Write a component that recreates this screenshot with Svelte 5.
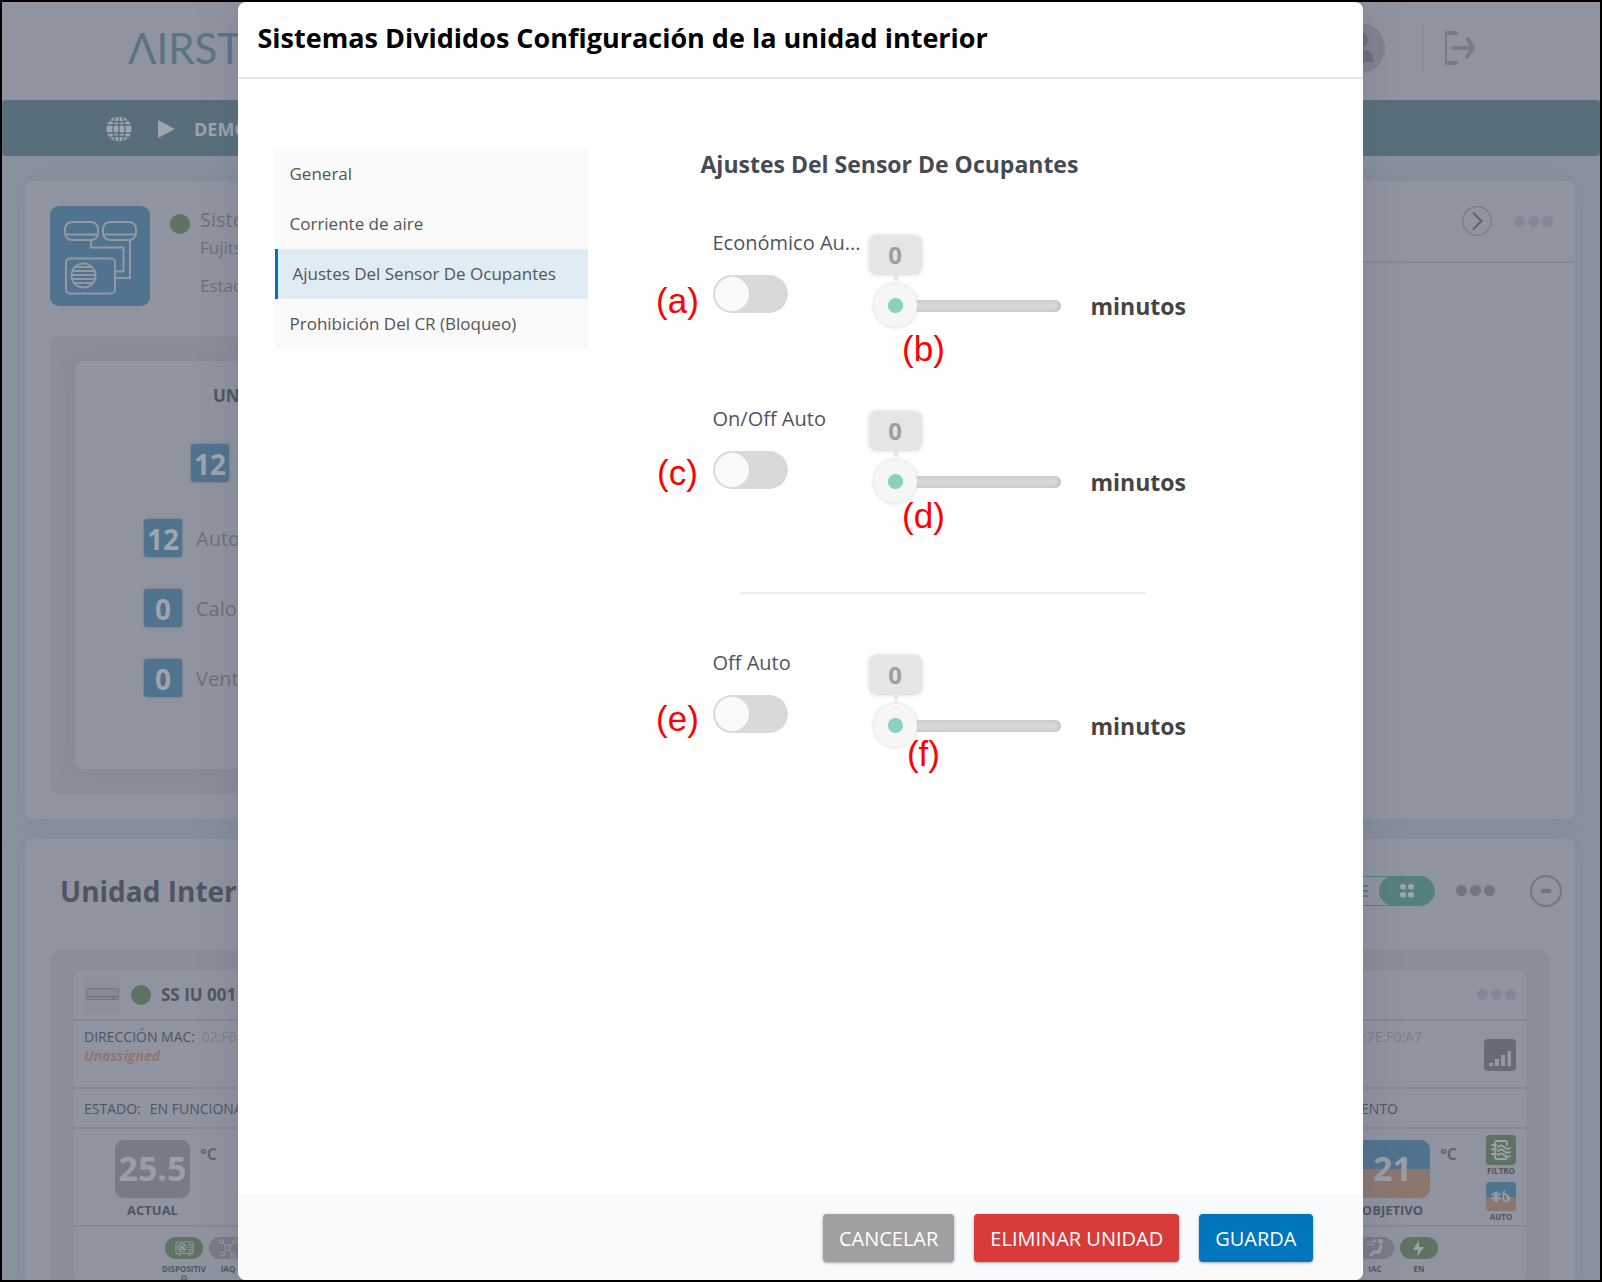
<script>
  const menu = ['General', 'Corriente de aire', 'Ajustes Del Sensor De Ocupantes', 'Prohibición Del CR (Bloqueo)'];
  let active = $state(2);

  let sensors = $state([
    { id: 'eco', label: 'Económico Au...', on: false, minutes: 0 },
    { id: 'onoff', label: 'On/Off Auto', on: false, minutes: 0 },
    { id: 'off', label: 'Off Auto', on: false, minutes: 0, divided: true }
  ]);

  const marks = ['a', 'b', 'c', 'd', 'e', 'f'];

  const modes = [
    { count: 12, label: 'Auto' },
    { count: 0, label: 'Calor' },
    { count: 0, label: 'Ventil.' }
  ];
</script>

{#snippet dots()}
  <span class="dots"><i></i><i></i><i></i></span>
{/snippet}

<div class="app">
  <div class="page">
    <header class="top">
      <span class="logo">ΛIRST</span>
      <div class="account">
        <svg class="avatar" width="50" height="50" viewBox="0 0 50 50">
          <circle cx="25" cy="25" r="25" fill="#7f838f" />
          <circle cx="25" cy="17" r="8" fill="#686d7b" />
          <path d="M12 39v-3q0-9 10-9h6q10 0 10 9v3z" fill="#686d7b" />
        </svg>
        <span class="rule"></span>
        <svg width="32" height="36" viewBox="0 0 32 36" fill="none" stroke="#777b86" stroke-width="4" stroke-linecap="round" stroke-linejoin="round">
          <path d="M3 3v30" stroke-width="2" />
          <path d="M4 3h9M4 33h9M10 18h18M25 9l5 9-6 9" />
        </svg>
      </div>
    </header>

    <nav class="bar">
      <svg width="26" height="26" viewBox="0 0 26 26">
        <circle cx="13" cy="13" r="12.5" fill="#a0a4ad" />
        <g fill="none" stroke="#586f7b" stroke-width="1.3">
          <ellipse cx="13" cy="13" rx="6" ry="14" />
          <path d="M13 0v26M0 9h26M0 17h26M3 4.500q10 3 20 0M3 21.500q10-3 20 0" />
        </g>
      </svg>
      <svg width="17" height="18" viewBox="0 0 17 18"><path d="M0 0l17 9-17 9z" fill="#a0a4ad" /></svg>
      <b>DEMO</b>
    </nav>

    <section class="card system">
      <div class="summary">
        <div class="ident">
          <svg width="100" height="100" viewBox="0 0 100 100" fill="none" stroke="#9498a3" stroke-width="2">
            <rect width="100" height="100" rx="9" fill="#50738f" stroke="none" />
            <rect x="15" y="16" width="33" height="18" rx="7" />
            <rect x="53" y="16" width="33" height="18" rx="7" />
            <path d="M15 28.500h33M53 28.500h33" />
            <path d="M41 34v7.500h32.500v24H65M80 34v38H65" />
            <rect x="16" y="52.500" width="49" height="35" rx="4" />
            <circle cx="33.500" cy="69.500" r="12" />
            <path d="M25 61h17M22 65h23M22 69h24M22 73h23M25 77h17" />
          </svg>
          <i class="status"></i>
          <div class="names">
            <span class="name">Sistema</span>
            <span>Fujitsu</span>
            <span class="state">Estado</span>
          </div>
        </div>
        <div class="panel">
          <div class="counts">
            <b class="caption">UNIDAD</b>
            <b class="count total">12</b>
            {#each modes as mode}
              <div class="mode"><b class="count">{mode.count}</b><span>{mode.label}</span></div>
            {/each}
          </div>
        </div>
      </div>
      <div class="actions">
        <svg width="30" height="30" viewBox="0 0 30 30" fill="none" stroke="#777b86" stroke-linecap="round">
          <circle cx="15" cy="15" r="14.300" stroke-width="1.200" />
          <path d="M11.500 7l8 8-8 8" stroke="#5d616d" stroke-width="2" />
        </svg>
        {@render dots()}
      </div>
    </section>

    <section class="card indoor">
      <div class="heading">
        <h2>Unidad Interior</h2>
        <div class="tools">
          <span class="view">
            <svg width="16" height="12" viewBox="0 0 16 12" stroke="#54807f" stroke-width="2"><path d="M0 1h16M0 6h16M0 11h16" /></svg>
            <span class="grid-view">
              <svg width="14" height="14" viewBox="0 0 14 14" fill="#a0a4ad">
                <rect width="6" height="5.500" rx="2.500" /><rect x="8" width="6" height="5.500" rx="2.500" />
                <rect y="8" width="6" height="5.500" rx="2.500" /><rect x="8" y="8" width="6" height="5.500" rx="2.500" />
              </svg>
            </span>
          </span>
          <span class="dark">{@render dots()}</span>
          <span class="minus"></span>
        </div>
      </div>

      <div class="units">
        <article class="unit">
          <div class="row title">
            <svg width="37" height="38" viewBox="0 0 37 38">
              <rect width="37" height="38" fill="#8c909b" />
              <rect x="2.500" y="12.500" width="32" height="11" rx="1" fill="#858994" stroke="#747884" />
              <path d="M3 20.500h31M27 22h5" stroke="#6c707c" />
            </svg>
            <i class="status"></i>
            <b>SS IU 001</b>
          </div>
          <div class="row mac">
            <div>
              <div>DIRECCIÓN MAC: <span class="faint">02:F6:</span></div>
              <em>Unassigned</em>
            </div>
          </div>
          <div class="row run">ESTADO: <span>EN FUNCIONA</span></div>
          <div class="row temps">
            <div class="temp"><b class="degrees">25.5</b><b>ACTUAL</b></div>
            <b class="celsius">°C</b>
          </div>
          <div class="row pills">
            <div class="pill green">
              <svg width="38" height="22" viewBox="0 0 38 22" fill="none" stroke="#9498a3" stroke-width="1.200">
                <rect x="11" y="5" width="17" height="11.500" rx="1" />
                <circle cx="17" cy="10.700" r="4" /><circle cx="17" cy="10.700" r="1.300" />
                <path d="M14 8l6 5.500M14 13.500L20 8M23 7.500h4M23 10h4M23 12.500h4M23 14.500h4M13 18h3M23 18h3" />
              </svg>
              <b>DISPOSITIV<br />O</b>
            </div>
            <div class="pill">
              <svg width="38" height="22" viewBox="0 0 38 22" fill="none" stroke="#9a9ea8">
                <circle cx="18.500" cy="10.500" r="3" />
                <circle cx="12.500" cy="4.500" r="2" /><circle cx="26" cy="4.500" r="2" /><circle cx="13.500" cy="17" r="2" /><circle cx="24" cy="19" r="2" />
                <path d="M14 6l2.500 2.500M24.500 5.500L21 8.500M15 15.500l2-2.500M20.500 13l2.500 4" />
              </svg>
              <b>IAQ</b>
            </div>
          </div>
        </article>

        <article class="unit end">
          <div class="row title">{@render dots()}</div>
          <div class="row mac">
            <span class="faint">A:7E:F0:A7</span>
            <svg width="32" height="32" viewBox="0 0 32 32">
              <rect width="32" height="32" rx="4" fill="#676b77" />
              <path d="M5 27v-3h4v3zM11 27v-7h4v7zM17 27V16h4v11zM23.500 27V12h3.500v15z" fill="#9498a3" />
            </svg>
          </div>
          <div class="row run">MIENTO</div>
          <div class="row temps">
            <div class="temp"><b class="degrees target">21</b><b>OBJETIVO</b></div>
            <b class="celsius">°C</b>
            <div class="flags">
              <svg width="30" height="30" viewBox="0 0 30 30" fill="none" stroke="#9da1aa" stroke-width="1.800" stroke-linecap="round">
                <rect width="30" height="30" rx="4" fill="#5f7362" stroke="none" />
                <path d="M9 12V8q0-2 2-2h8q2 0 2 2v2M9 13v9q0 2 2 2h8q2 0 2-2" />
                <path d="M6 10h4M6 14.500h4M6 19h4M12 12q3-3 6 0t6 1M12 16q3-3 6 0t6 1M12 20q3-3 6 0t6 1" />
              </svg>
              <b>FILTRO</b>
              <svg width="30" height="29" viewBox="0 0 30 29" fill="none" stroke="#9da1aa" stroke-width="1.300" stroke-linecap="round">
                <rect width="30" height="29" rx="4" fill="#50738f" stroke="none" />
                <path d="M0 15h30v10q0 4-4 4H4q-4 0-4-4z" fill="#8c776f" stroke="none" />
                <path d="M10 10v9M6 12l8 5M6 17l8-5M8.500 10.500l1.500 1.500 1.500-1.500M8.500 18.500l1.500-1.500 1.500 1.500" stroke-width="1.500" />
                <path d="M18.500 9q-2.500 2.500-1.500 4M19 11.500q4 3.500 3 7-2 1.500-4 0-2-2.500 1-7zM22 19q2-2.500 0-6" />
              </svg>
              <b>AUTO</b>
            </div>
          </div>
          <div class="row pills">
            <div class="pill">
              <svg width="38" height="22" viewBox="0 0 38 22" fill="none" stroke="#9a9ea8" stroke-width="1.200" stroke-linecap="round" stroke-linejoin="round">
                <circle cx="24.500" cy="4.500" r="1.800" fill="#9a9ea8" />
                <path d="M25 9l-2 6h-5l-3 3" stroke-width="3" />
                <path d="M11 5h7q2 0 1.500-1.500T17 3.500M11 7.500h5q2 0 1.500 1.500" />
              </svg>
              <b>IAC</b>
            </div>
            <div class="pill green">
              <svg width="38" height="22" viewBox="0 0 38 22"><path d="M19 3l-6 10h5l-1 7 7-10h-5z" fill="#9da1aa" /></svg>
              <b>EN</b>
            </div>
          </div>
        </article>
      </div>
    </section>
  </div>

  <div class="modal" role="dialog" aria-labelledby="modal-title">
    <header><h1 id="modal-title">Sistemas Divididos Configuración de la unidad interior</h1></header>

    <div class="body">
      <div class="menu">
        {#each menu as item, i}
          <button class:active={i === active} onclick={() => (active = i)}>{item}</button>
        {/each}
      </div>

      <form class="settings">
        <h2>Ajustes Del Sensor De Ocupantes</h2>
        {#each sensors as sensor}
          {#if sensor.divided}<hr />{/if}
          <div class="sensor">
            <div class="switch">
              <label for="{sensor.id}-on">{sensor.label}</label>
              <input id="{sensor.id}-on" type="checkbox" bind:checked={sensor.on} />
            </div>
            <div class="slider">
              <output for="{sensor.id}-min">{sensor.minutes}</output>
              <input id="{sensor.id}-min" type="range" min="0" max="60" bind:value={sensor.minutes} />
            </div>
            <label class="unit-name" for="{sensor.id}-min">minutos</label>
          </div>
        {/each}
      </form>
    </div>

    <footer>
      <button class="cancel">CANCELAR</button>
      <button class="delete">ELIMINAR UNIDAD</button>
      <button class="save">GUARDA</button>
    </footer>

    {#each marks as mark}
      <span class="mark {mark}">({mark})</span>
    {/each}
  </div>
</div>

<style>
  :global(body) {
    margin: 0;
  }

  .app {
    position: relative;
    box-sizing: border-box;
    height: 100vh;
    border: 2px solid #000;
    overflow: hidden;
    background: #8a919e;
    color: #4f5460;
    font-family: 'Open Sans', 'Noto Sans', sans-serif;
  }

  .app * {
    box-sizing: border-box;
  }

  svg {
    display: block;
    flex: none;
  }

  h1,
  h2 {
    margin: 0;
  }

  /* Dimmed page behind the dialog */
  .top {
    display: flex;
    align-items: center;
    justify-content: space-between;
    height: 98px;
    padding: 0 125px 6px 126px;
    background: #9094a0;
  }

  .logo {
    color: #5b7482;
    font: 42px/44px Lato, sans-serif;
  }

  .account {
    display: flex;
    align-items: center;
  }

  .account .rule {
    width: 1px;
    height: 50px;
    margin: 0 20px 0 37px;
    background: #858995;
  }

  .bar {
    display: flex;
    align-items: center;
    height: 56px;
    padding: 2px 0 0 104px;
    border-radius: 4px;
    background: #586f7b;
    color: #a0a4ad;
    font-size: 18px;
  }

  .bar svg + svg {
    margin: 0 19px 0 26px;
  }

  .card {
    margin: 25px 25px 20px 23px;
    border-radius: 6px;
    background: #9094a0;
    box-shadow: 0 0 20px rgba(110, 114, 130, 0.2);
  }

  .system {
    display: flex;
    align-items: flex-start;
  }

  .summary {
    flex: 1;
    padding: 25px;
  }

  .ident {
    display: flex;
    align-items: flex-start;
  }

  .status {
    flex: none;
    width: 20px;
    height: 20px;
    border-radius: 50%;
    background: #5f7362;
  }

  .ident .status {
    margin: 8px 10px 0 20px;
  }

  .names {
    display: flex;
    flex-direction: column;
    color: #6b707c;
    font-size: 17px;
    line-height: 28px;
  }

  .names .name {
    font-size: 20px;
  }

  .names .state {
    margin-top: 10px;
  }

  .panel {
    margin-top: 30px;
    padding: 25px;
    border-radius: 8px;
    background: #8a8e99;
  }

  .counts {
    display: flex;
    flex-direction: column;
    height: 408px;
    padding: 24px 69px;
    border-radius: 8px;
    background: #9094a0;
    box-shadow: 0 0 20px rgba(110, 114, 130, 0.2);
  }

  .caption {
    padding-left: 69px;
    font-size: 17px;
    line-height: 22px;
  }

  .count {
    width: 38px;
    height: 38px;
    border-radius: 3px;
    background: #50738f;
    box-shadow: 0 0 3px #6b707c;
    color: #a0a4ad;
    font-size: 28px;
    line-height: 40px;
    text-align: center;
  }

  .count.total {
    margin: 37px 47px 5px;
  }

  .mode {
    display: flex;
    align-items: center;
    gap: 14px;
    margin-top: 32px;
    color: #6b707c;
    font-size: 20px;
  }

  .actions {
    display: flex;
    align-items: center;
    justify-content: flex-end;
    gap: 22px;
    width: 50%;
    height: 82px;
    padding-right: 22px;
    border-bottom: 2px solid #868a95;
  }

  .dots {
    display: flex;
    gap: 3px;
    color: #838797;
  }

  .dots i {
    width: 11px;
    height: 11px;
    border-radius: 50%;
    background: currentColor;
  }

  .dark .dots {
    color: #72757f;
  }

  .indoor {
    margin-top: -5px;
    margin-bottom: 0;
    padding: 0 25px;
  }

  .system + .indoor {
    margin-top: 20px;
  }

  .heading {
    display: flex;
    align-items: center;
    justify-content: space-between;
    height: 111px;
    padding: 0 0 8px 10px;
  }

  .heading h2 {
    font-size: 28px;
    line-height: 38px;
  }

  .tools {
    display: flex;
    align-items: center;
    margin-right: -12px;
  }

  .view {
    display: flex;
    align-items: center;
    gap: 11px;
    height: 30px;
    margin-right: 21px;
    padding-left: 14px;
    border: 1px solid #54807f;
    border-radius: 15px;
  }

  .grid-view {
    display: grid;
    place-items: center;
    width: 55px;
    height: 30px;
    border-radius: 15px;
    background: #54807f;
  }

  .minus {
    display: grid;
    place-items: center;
    width: 32px;
    height: 32px;
    margin-left: 35px;
    border: 2px solid #72757f;
    border-radius: 50%;
  }

  .minus::after {
    content: '';
    width: 10px;
    height: 4px;
    background: #72757f;
  }

  .units {
    display: grid;
    grid-template-columns: 1fr 1fr;
    gap: 20px;
    padding: 20px 24px;
    border-radius: 12px;
    background: #8a8e99;
  }

  .unit {
    border-radius: 8px;
    background: #9094a0;
    font-size: 14px;
  }

  .row {
    display: flex;
    padding: 0 10px;
    border-bottom: 2px solid #858995;
  }

  .end .row {
    justify-content: flex-end;
  }

  .title {
    align-items: center;
    gap: 10px;
    height: 51px;
    font-size: 17px;
  }

  .mac {
    height: 68px;
    padding-top: 6px;
    line-height: 19px;
  }

  .mac .faint {
    margin-left: 3px;
    color: #7b7f8b;
  }

  .mac em {
    color: #8f766e;
    font-weight: 700;
  }

  .end .mac svg {
    margin: 12px 0 0 62px;
  }

  .run {
    align-items: center;
    gap: 9px;
    height: 40px;
  }

  .end .run {
    padding-right: 128px;
  }

  .temps {
    height: 98px;
    padding: 11px 10px 0 41px;
  }

  .temp {
    display: flex;
    flex-direction: column;
    align-items: center;
    font-size: 13px;
    line-height: 24px;
  }

  .degrees {
    width: 75px;
    height: 58px;
    border-radius: 9px;
    background: #777b86;
    color: #9a9ea8;
    font-size: 34px;
    line-height: 56px;
    text-align: center;
  }

  .degrees.target {
    background: linear-gradient(#50738f 50%, #8c776f 50%);
  }

  .celsius {
    margin-left: 10px;
    color: #606571;
    font-size: 16px;
    line-height: 28px;
  }

  .flags {
    display: flex;
    flex-direction: column;
    align-items: center;
    width: 34px;
    margin: -5px -2px 0 27px;
    font-size: 8px;
    line-height: 12px;
  }

  .flags svg + b {
    margin-bottom: 5px;
  }

  .pills {
    gap: 6px;
    padding: 10px 88px 0 91px;
    border: 0;
  }

  .pill {
    display: flex;
    flex-direction: column;
    align-items: center;
    width: 38px;
    font-size: 8px;
    line-height: 9px;
    text-align: center;
  }

  .pill svg {
    margin-bottom: 5px;
    border-radius: 11px;
    background: #777b86;
  }

  .pill.green svg {
    background: #5f7362;
  }

  /* Dialog */
  .modal {
    position: absolute;
    inset: 0 2px 0 0;
    display: flex;
    flex-direction: column;
    width: 90%;
    max-width: 1125px;
    margin: 0 auto;
    border-radius: 8px;
    background: #fff;
    box-shadow: 0 0 40px rgba(80, 84, 110, 0.25);
  }

  .modal > header {
    padding: 16px 20px 19px;
    border-bottom: 2px solid #e4e4e4;
    color: #000;
  }

  h1 {
    font-size: 27px;
    line-height: 40px;
  }

  .body {
    display: flex;
    flex: 1;
    align-items: flex-start;
    gap: 113px;
    padding: 70px 37px;
  }

  .menu {
    display: flex;
    flex: none;
    flex-direction: column;
    width: 313px;
    background: #fafafa;
  }

  .menu button {
    height: 50px;
    padding: 0 15px 2px;
    border: 0;
    background: none;
    color: #555;
    font: 17px 'Open Sans', sans-serif;
    text-align: left;
    cursor: pointer;
  }

  .menu .active {
    border-left: 3px solid #0076be;
    background: #e0ecf4;
  }

  .settings {
    flex: 1;
  }

  .settings h2 {
    margin-bottom: 54px;
    color: #464a55;
    font-size: 23px;
    line-height: 30px;
  }

  .sensor {
    display: flex;
    align-items: flex-end;
    margin: 0 0 81px 12px;
  }

  .switch {
    align-self: flex-start;
    width: 156px;
  }

  .switch label {
    display: block;
    margin-bottom: 22px;
    color: #50545f;
    font-size: 20px;
    line-height: 20px;
    white-space: nowrap;
  }

  .switch input {
    display: block;
    width: 75px;
    height: 38px;
    margin: 0;
    padding: 2px;
    border-radius: 19px;
    background: #d9d9d9;
    appearance: none;
    cursor: pointer;
  }

  .switch input::before {
    content: '';
    display: block;
    width: 34px;
    height: 34px;
    border-radius: 50%;
    background: #fafafa;
  }

  .switch input:checked {
    background: #8dd0c3;
  }

  .switch input:checked::before {
    margin-left: auto;
  }

  .slider {
    width: 192px;
    padding-top: 2px;
  }

  .slider output {
    position: relative;
    display: block;
    width: 53px;
    height: 40px;
    margin-bottom: 9px;
    border-radius: 8px;
    background: #e5e5e5;
    box-shadow: 0 0 5px #ddd;
    color: #9e9e9e;
    font-size: 24px;
    font-weight: 700;
    line-height: 40px;
    text-align: center;
  }

  .slider output::after {
    content: '';
    position: absolute;
    top: 100%;
    left: 24px;
    border: 3px solid transparent;
    border-top: 8px solid #e5e5e5;
    border-bottom: 0;
  }

  .slider input {
    display: block;
    width: 187px;
    height: 44px;
    margin: 0 0 0 5px;
    background: none;
    appearance: none;
  }

  .slider input::-webkit-slider-runnable-track {
    height: 12px;
    border-radius: 6px;
    background: #d9d9d9;
    box-shadow: inset 0 0 6px #bbb;
  }

  .slider input::-webkit-slider-thumb {
    width: 43px;
    height: 43px;
    margin-top: -16px;
    border-radius: 50%;
    background: radial-gradient(circle, #8dd0c3 7px, #f6f6f6 8px);
    box-shadow: 0 0 4px #ccc;
    appearance: none;
  }

  .unit-name {
    margin-left: 30px;
    color: #444;
    font-size: 23px;
    font-weight: 700;
    line-height: 44px;
  }

  hr {
    width: 406px;
    margin: 88px 0 59px 39px;
    border: 0;
    border-top: 2px solid #ececec;
  }

  footer {
    display: flex;
    justify-content: flex-end;
    gap: 20px;
    padding: 20px 50px 18px;
    border-radius: 0 0 8px 8px;
    background: #f8fafc;
  }

  footer button {
    height: 48px;
    padding: 0 16px;
    border: 0;
    border-radius: 4px;
    box-shadow: 0 1px 3px rgba(0, 0, 0, 0.35);
    color: #fff;
    font: 20px 'Open Sans', sans-serif;
    cursor: pointer;
  }

  .cancel {
    background: #a0a0a0;
  }

  .delete {
    background: #d93a3a;
  }

  .save {
    background: #0076be;
  }

  /* Callout letters laid over the controls */
  .mark {
    position: absolute;
    left: 418px;
    width: 44px;
    color: #f00;
    font: 35px/40px 'Liberation Sans', sans-serif;
    text-align: center;
  }

  .b,
  .d,
  .f {
    left: 664px;
  }

  .a {
    top: 279px;
  }

  .b {
    top: 327px;
  }

  .c {
    top: 451px;
  }

  .d {
    top: 494px;
  }

  .e {
    top: 697px;
  }

  .f {
    top: 732px;
  }
</style>
